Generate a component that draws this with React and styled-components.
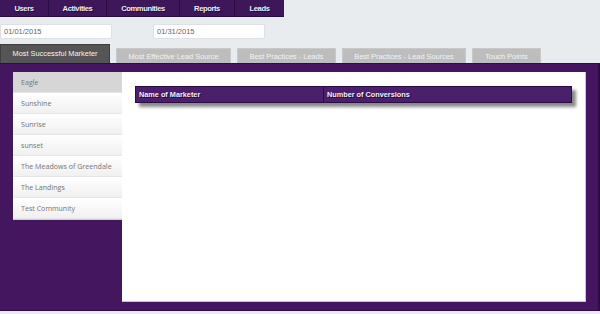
import styled, { createGlobalStyle } from "styled-components";

const GlobalStyle = createGlobalStyle`
  body {
    margin: 0;
    background: #e9ecef;
    font-family: "Liberation Sans", Arial, sans-serif;
  }
`;

const Page = styled.div`
  width: 600px;
  height: 314px;
  display: flex;
  flex-direction: column;
  overflow: hidden;
`;

const NavBar = styled.div`
  display: flex;
  width: 284px;
  height: 17px;
  background: #3d1759;
  border-bottom: 1px solid #2a0d40;
  box-sizing: border-box;
`;

const NavItem = styled.div`
  width: ${(p) => p.w}px;
  display: flex;
  align-items: center;
  justify-content: center;
  color: #f2eef6;
  font-size: 7.6px;
  font-weight: 700;
  letter-spacing: -0.4px;
  text-shadow: 1px 1px 0 #1c0830;
  border-right: ${(p) => (p.last ? "none" : "1px solid #2a0d40")};
  box-sizing: border-box;
`;

const DateRow = styled.div`
  display: flex;
  gap: 41px;
  margin-top: 7px;
`;

const DateInput = styled.div`
  width: 112px;
  height: 15px;
  box-sizing: border-box;
  background: #fff;
  border: 1px solid #dde0e4;
  border-radius: 2px;
  padding-left: 3px;
  display: flex;
  align-items: center;
  font-size: 7.5px;
  color: #666;
`;

const TabRow = styled.div`
  display: flex;
  align-items: flex-end;
  gap: 6px;
  margin-top: 5px;
`;

const Tab = styled.div`
  width: ${(p) => p.w}px;
  height: ${(p) => (p.active ? 19 : 15)}px;
  box-sizing: border-box;
  background: ${(p) => (p.active ? "#555555" : "#bdbdbd")};
  border: 1px solid ${(p) => (p.active ? "#3f3f3f" : "#c9c9c9")};
  border-bottom: none;
  color: ${(p) => (p.active ? "#f4f4f4" : "#f3f3f3")};
  font-size: 7.4px;
  display: flex;
  align-items: ${(p) => (p.active ? "flex-start" : "center")};
  padding-top: ${(p) => (p.active ? "4px" : "0")};
  justify-content: center;
`;

const Panel = styled.div`
  width: 600px;
  height: 248px;
  box-sizing: border-box;
  background: #451660;
  border-right: 2px solid #2e0c44;
  border-top: 1px solid #2e0c44;
  border-bottom: 1px solid #2e0c44;
  padding: 8px 12px 8px 13px;
  display: flex;
`;

const CommunityList = styled.div`
  width: 109px;
  align-self: flex-start;
  display: flex;
  flex-direction: column;
  border-bottom: 1px solid #cfcfcf;
`;

const CommunityItem = styled.div`
  height: 21px;
  box-sizing: border-box;
  padding-left: 8px;
  display: flex;
  align-items: center;
  font-family: "Open Sans", "DejaVu Sans", sans-serif;
  font-size: 7.1px;
  color: #747474;
  background: ${(p) =>
    p.active ? "#d6d6d6" : "linear-gradient(#ffffff, #f0f0f0)"};
  border-bottom: 1px solid #e6e6e6;
`;

const Content = styled.div`
  flex: 1;
  background: #fff;
  border-right: 1px solid #c8c8c8;
  border-bottom: 1px solid #c8c8c8;
  padding: 14px 13px 0 13px;
`;

const TableHead = styled.div`
  display: flex;
  height: 17px;
  box-sizing: border-box;
  background: #4a1f6c;
  border: 1px solid #2c0c45;
  box-shadow: 4px 4px 3px #8a8a8a;
`;

const HeadCell = styled.div`
  width: ${(p) => (p.w ? `${p.w}px` : "auto")};
  flex: ${(p) => (p.w ? "none" : 1)};
  display: flex;
  align-items: center;
  padding-left: 3px;
  color: #f5f0fa;
  font-size: 7.3px;
  font-weight: 700;
  text-shadow: 1px 1px 0 #1c0830;
  border-right: ${(p) => (p.w ? "1px solid #2c0c45" : "none")};
  box-sizing: border-box;
`;

const navItems = [
  ["Users", 49],
  ["Activities", 58],
  ["Communities", 73],
  ["Reports", 55],
  ["Leads", 49],
];

const tabs = [
  ["Most Successful Marketer", 110],
  ["Most Effective Lead Source", 115],
  ["Best Practices - Leads", 99],
  ["Best Practices - Lead Sources", 124],
  ["Touch Points", 69],
];

const communities = [
  "Eagle",
  "Sunshine",
  "Sunrise",
  "sunset",
  "The Meadows of Greendale",
  "The Landings",
  "Test Community",
];

const App = () => {
  return (
    <Page>
      <GlobalStyle />
      <NavBar>
        {navItems.map(([label, w], i) => (
          <NavItem key={label} w={w} last={i === navItems.length - 1}>
            {label}
          </NavItem>
        ))}
      </NavBar>
      <DateRow>
        <DateInput>01/01/2015</DateInput>
        <DateInput>01/31/2015</DateInput>
      </DateRow>
      <TabRow>
        {tabs.map(([label, w], i) => (
          <Tab key={label} w={w} active={i === 0}>
            {label}
          </Tab>
        ))}
      </TabRow>
      <Panel>
        <CommunityList>
          {communities.map((name, i) => (
            <CommunityItem key={name} active={i === 0}>
              {name}
            </CommunityItem>
          ))}
        </CommunityList>
        <Content>
          <TableHead>
            <HeadCell w={188}>Name of Marketer</HeadCell>
            <HeadCell>Number of Conversions</HeadCell>
          </TableHead>
        </Content>
      </Panel>
    </Page>
  );
};

export default App;
